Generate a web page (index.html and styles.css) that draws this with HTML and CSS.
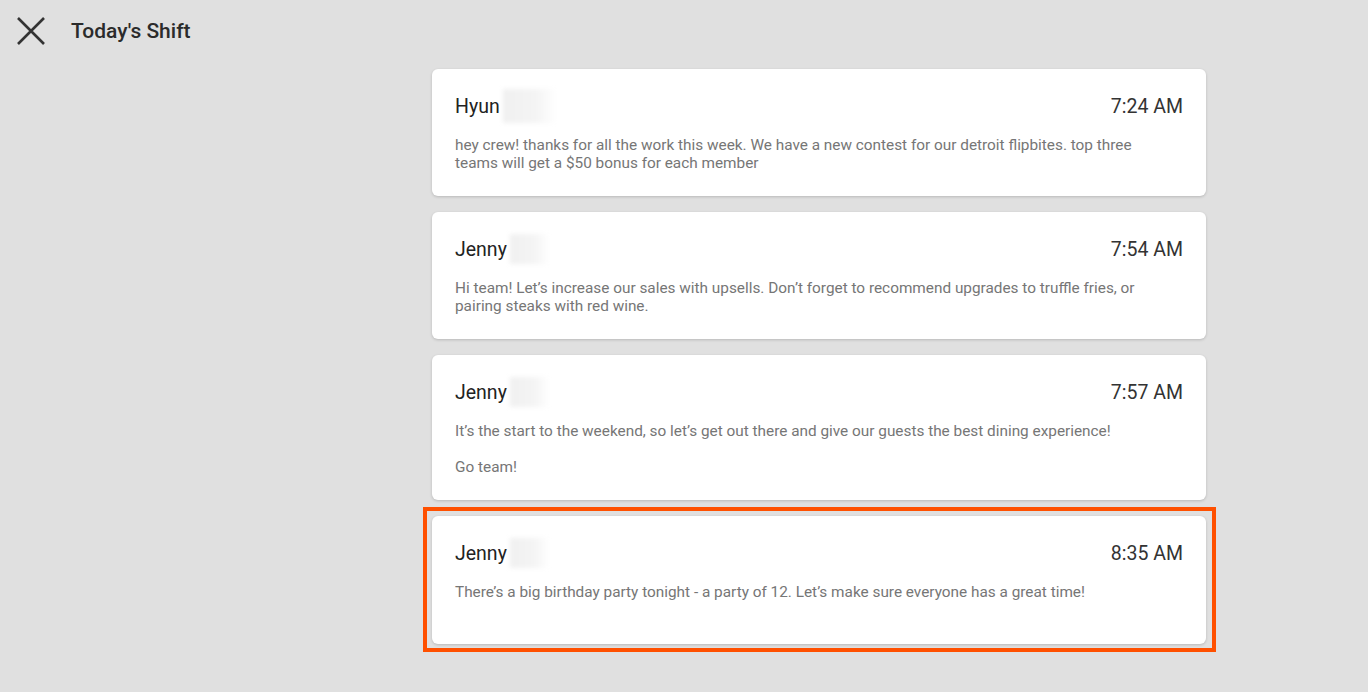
FILE: index.html
```html
<!DOCTYPE html>
<html lang="en">
<head>
    <meta charset="UTF-8">
    <meta name="viewport" content="width=device-width, initial-scale=1.0">
    <title>Today's Shift</title>
    <link rel="stylesheet" href="styles.css">
</head>
<body>
    <div class="topbar">
        <button class="close" aria-label="Close">
            <svg width="30" height="30" viewBox="0 0 30 30">
                <path d="M2 2 L28 28 M28 2 L2 28" stroke="#333" stroke-width="2.6" fill="none"/>
            </svg>
        </button>
        <div class="title">Today's Shift</div>
    </div>

    <div class="feed">
        <div class="card">
            <div class="card-head">
                <div class="name">Hyun<span class="redact wide"></span></div>
                <div class="time">7:24 AM</div>
            </div>
            <div class="body">
                <p>hey crew! thanks for all the work this week. We have a new contest for our detroit flipbites. top three teams will get a $50 bonus for each member</p>
            </div>
        </div>

        <div class="card">
            <div class="card-head">
                <div class="name">Jenny<span class="redact"></span></div>
                <div class="time">7:54 AM</div>
            </div>
            <div class="body">
                <p>Hi team! Let’s increase our sales with upsells. Don’t forget to recommend upgrades to truffle fries, or pairing steaks with red wine.</p>
            </div>
        </div>

        <div class="card">
            <div class="card-head">
                <div class="name">Jenny<span class="redact"></span></div>
                <div class="time">7:57 AM</div>
            </div>
            <div class="body">
                <p>It’s the start to the weekend, so let’s get out there and give our guests the best dining experience!</p>
                <p>Go team!</p>
            </div>
        </div>

        <div class="card selected">
            <div class="card-head">
                <div class="name">Jenny<span class="redact"></span></div>
                <div class="time">8:35 AM</div>
            </div>
            <div class="body">
                <p>There’s a big birthday party tonight - a party of 12. Let’s make sure everyone has a great time!</p>
            </div>
        </div>
    </div>
</body>
</html>
```

FILE: styles.css
```css
body {
    font-family: Roboto, 'Noto Sans', sans-serif;
    background-color: #e0e0e0;
    margin: 0;
    padding: 0;
    height: 100vh;
    overflow: hidden;
}
.topbar {
    display: flex;
    align-items: center;
    height: 62px;
    padding-left: 16px;
}
.close {
    background: none;
    border: none;
    padding: 0;
    width: 30px;
    height: 30px;
    cursor: pointer;
    display: flex;
}
.title {
    margin-left: 25px;
    font-size: 21px;
    font-weight: 500;
    color: #2b2b2b;
}
.feed {
    width: 774px;
    margin-left: 432px;
    margin-top: 7px;
    display: flex;
    flex-direction: column;
    gap: 16px;
}
.card {
    position: relative;
    background-color: #ffffff;
    border-radius: 6px;
    box-shadow: 0 1px 3px rgba(0, 0, 0, 0.18);
    padding: 24px 23px 24px 23px;
    box-sizing: border-box;
    min-height: 127px;
}
.card.selected {
    min-height: 128px;
}
/* highlight frame drawn over the selected card */
.card.selected::after {
    content: "";
    position: absolute;
    top: -9px;
    left: -9px;
    right: -10px;
    bottom: -8px;
    border: 4px solid #ff5000;
}
.card-head {
    display: flex;
    justify-content: space-between;
    align-items: center;
    height: 26px;
}
.name {
    display: flex;
    align-items: center;
    font-size: 19.5px;
    color: #222;
}
.redact {
    display: inline-block;
    width: 40px;
    height: 30px;
    margin-left: 3px;
    background: linear-gradient(90deg, #f0f0f0 0%, #f4f4f4 60%, #ffffff 100%);
    filter: blur(2px);
}
.redact.wide {
    width: 54px;
    height: 34px;
}
.time {
    font-size: 19.5px;
    color: #333;
}
.body {
    margin-top: 17px;
    padding-right: 32px;
    font-size: 15.35px;
    line-height: 18px;
    color: #767676;
}
.body p {
    margin: 0 0 18px 0;
}
.body p:last-child {
    margin-bottom: 0;
}
```
